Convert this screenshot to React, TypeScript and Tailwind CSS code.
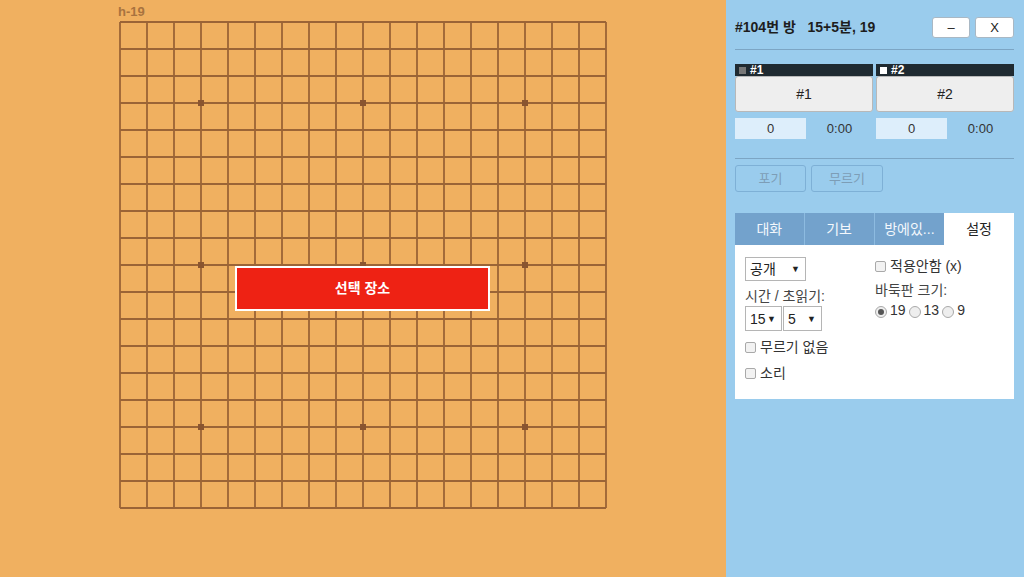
import React from "react";

const SIZE = 19;
const GAP = 27;
const STARS = [3, 9, 15];

function Board() {
  const end = 2 + GAP * (SIZE - 1);
  const lines = Array.from({ length: SIZE }, (_, i) => 2 + i * GAP);

  return (
    <svg width={492} height={492} className="block">
      {lines.map((p) => (
        <g key={p}>
          <line x1={2} y1={p} x2={end} y2={p} stroke="#9b6436" strokeWidth={1.8} />
          <line x1={p} y1={2} x2={p} y2={end} stroke="#9b6436" strokeWidth={1.8} />
        </g>
      ))}
      {STARS.map((r) =>
        STARS.map((c) => (
          <rect
            key={`${r}-${c}`}
            x={2 + c * GAP - 3}
            y={2 + r * GAP - 3}
            width={6}
            height={6}
            fill="#8a5530"
          />
        ))
      )}
    </svg>
  );
}

function CheckBox({ label }: { label: string }) {
  return (
    <label className="flex h-[18px] items-center gap-[4px] text-[14px] leading-[18px] text-[#333]">
      <span className="inline-block h-[11px] w-[11px] rounded-[2px] border border-[#a9a9a9] bg-[#f2f2f2]" />
      {label}
    </label>
  );
}

function Radio({ label, checked }: { label: string; checked?: boolean }) {
  return (
    <span className="flex items-center gap-[3px]">
      <span className="mt-[3px] flex h-[12px] w-[12px] items-center justify-center rounded-full border border-[#a9a9a9] bg-[#eeeeee]">
        {checked && <span className="h-[6px] w-[6px] rounded-full bg-[#555]" />}
      </span>
      <span>{label}</span>
    </span>
  );
}

function Select({ value, w, h }: { value: string; w: string; h: string }) {
  return (
    <div
      className={`flex ${h} ${w} items-center justify-between border border-[#b5b5b5] bg-white pl-[4px] pr-[5px] text-[14px] text-[#222]`}
    >
      <span>{value}</span>
      <span className="text-[9px]">▼</span>
    </div>
  );
}

function Player({ name, stone }: { name: string; stone: string }) {
  return (
    <div className="flex flex-1 flex-col">
      <div className="flex h-[12px] items-center gap-[4px] bg-[#1f2a31] pl-[4px] text-[12px] font-bold leading-none text-white">
        <span className={`inline-block h-[7px] w-[7px] ${stone}`} />
        {name}
      </div>
      <div className="flex h-[36px] items-center justify-center rounded-[3px] border border-[#b8b8b8] bg-[#eeeeee] text-[14px] text-[#222]">
        {name}
      </div>
      <div className="mt-[6px] flex h-[21px] text-[13px] text-[#333]">
        <div className="flex w-[71px] items-center justify-center bg-[#ddeefb]">0</div>
        <div className="flex flex-1 items-center justify-center">0:00</div>
      </div>
    </div>
  );
}

export default function App() {
  return (
    <div
      className="flex h-[577px] w-[1024px] overflow-hidden bg-[#f0b060]"
      style={{ fontFamily: '"Liberation Sans", "Noto Sans CJK KR", sans-serif' }}
    >
      <main className="w-[726px] pl-[118px] pt-[4px]">
        <div className="h-[16px] text-[13px] font-bold leading-[16px] text-[#a8733f]">h-19</div>
        <div className="relative">
          <Board />
          <button className="absolute left-[117px] top-[246px] flex h-[45px] w-[255px] items-center justify-center border-2 border-white bg-[#ee2214] text-[14px] font-bold text-white">
            선택 장소
          </button>
        </div>
      </main>

      <aside className="flex-1 bg-[#9acced] pl-[9px] pr-[10px] pt-[17px]">
        <div className="flex h-[21px] items-center justify-between">
          <span className="text-[14px] font-bold text-[#1d1d1d]">
            #104번 방 &nbsp; 15+5분, 19
          </span>
          <div className="flex gap-[5px]">
            <button className="h-[21px] w-[38px] rounded-[3px] border border-[#a9b8c4] bg-white text-[13px] leading-none text-[#222]">
              –
            </button>
            <button className="h-[21px] w-[39px] rounded-[3px] border border-[#a9b8c4] bg-white text-[13px] leading-none text-[#222]">
              X
            </button>
          </div>
        </div>

        <div className="mt-[11px] border-t border-[#7ca5c4]" />

        <div className="mt-[14px] flex gap-[3px]">
          <Player name="#1" stone="bg-[#777]" />
          <Player name="#2" stone="bg-white" />
        </div>

        <div className="mt-[19px] border-t border-[#7ca5c4]" />

        <div className="mt-[6px] flex gap-[5px]">
          <button className="h-[27px] w-[71px] rounded-[3px] border border-[#7eb0d6] text-[13px] text-[#7d9db6]">
            포기
          </button>
          <button className="h-[27px] w-[72px] rounded-[3px] border border-[#7eb0d6] text-[13px] text-[#7d9db6]">
            무르기
          </button>
        </div>

        <div className="mt-[21px]">
          <div className="grid h-[32px] grid-cols-4 text-[14px]">
            <div className="flex items-center justify-center border-r border-[#8dbbe0] bg-[#73a2cc] text-[#f4f8fc]">대화</div>
            <div className="flex items-center justify-center border-r border-[#8dbbe0] bg-[#73a2cc] text-[#f4f8fc]">기보</div>
            <div className="flex items-center justify-center bg-[#73a2cc] text-[#f4f8fc]">방에있...</div>
            <div className="flex items-center justify-center bg-white text-[#222]">설정</div>
          </div>
          <div className="flex h-[154px] bg-white pl-[10px] pt-[12px] leading-[18px]">
            <div className="flex w-[130px] flex-col">
              <Select value="공개" w="w-[61px]" h="h-[24px]" />
              <div className="mt-[6px] h-[18px] text-[14px] text-[#444]">시간 / 초읽기:</div>
              <div className="mt-[1px] flex gap-[1px]">
                <Select value="15" w="w-[37px]" h="h-[25px]" />
                <Select value="5" w="w-[39px]" h="h-[25px]" />
              </div>
              <div className="mt-[7px]">
                <CheckBox label="무르기 없음" />
              </div>
              <div className="mt-[8px]">
                <CheckBox label="소리" />
              </div>
            </div>
            <div className="flex flex-col text-[14px] text-[#333]">
              <CheckBox label="적용안함 (x)" />
              <div className="mt-[6px] h-[18px] text-[#444]">바둑판 크기:</div>
              <div className="mt-[2px] flex h-[18px] gap-[3px]">
                <Radio label="19" checked />
                <Radio label="13" />
                <Radio label="9" />
              </div>
            </div>
          </div>
        </div>
      </aside>
    </div>
  );
}
